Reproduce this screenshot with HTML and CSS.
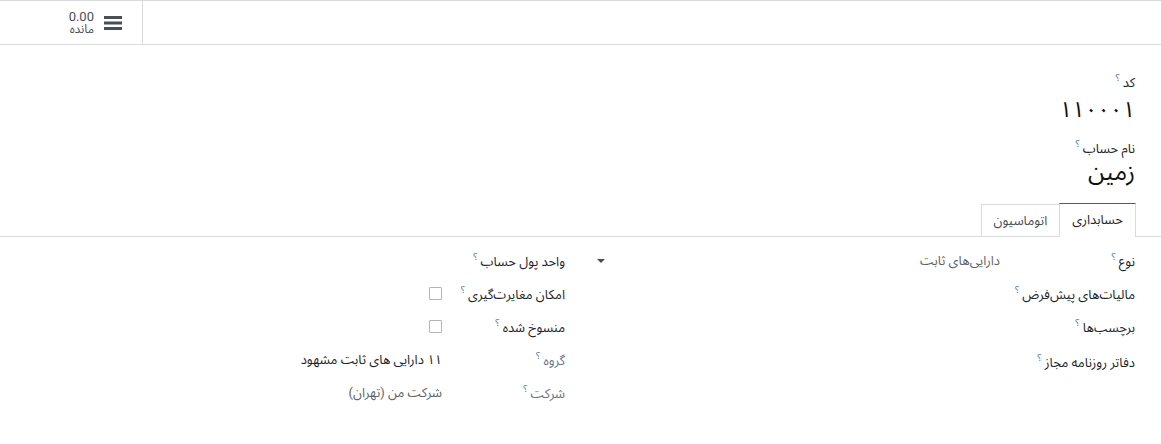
FILE: index.html
```html
<!DOCTYPE html>
<html lang="fa">
<head>
  <meta charset="UTF-8" />
  <title>حساب</title>
  <link rel="stylesheet" href="styles.css">
</head>
<body>
  <div class="topbar">
    <div class="balance-box">
      <div class="balance">
        <span class="balance-value">0.00</span>
        <span class="balance-label">مانده</span>
      </div>
      <svg class="menu-icon" width="18" height="16" viewBox="0 0 18 16">
        <rect x="0" y="1" width="18" height="3" fill="#4a4f55"/>
        <rect x="0" y="6.5" width="18" height="3" fill="#4a4f55"/>
        <rect x="0" y="12" width="18" height="3" fill="#4a4f55"/>
      </svg>
    </div>
  </div>

  <div class="sheet">
    <div class="title-field">
      <label class="title-label">کد<sup class="tip">؟</sup></label>
      <div class="title-value code">۱۱۰۰۰۱</div>
    </div>
    <div class="title-field">
      <label class="title-label">نام حساب<sup class="tip">؟</sup></label>
      <div class="title-value name">زمین</div>
    </div>

    <ul class="tabs">
      <li class="tab active">حسابداری</li>
      <li class="tab">اتوماسیون</li>
    </ul>

    <div class="groups">
      <div class="group group-main">
        <div class="row">
          <label class="field-label">نوع<sup class="tip">؟</sup></label>
          <div class="field-value select">
            <span class="muted">دارایی‌های ثابت</span>
            <span class="caret"></span>
          </div>
        </div>
        <div class="row">
          <label class="field-label">مالیات‌های پیش‌فرض<sup class="tip">؟</sup></label>
          <div class="field-value"></div>
        </div>
        <div class="row">
          <label class="field-label">برچسب‌ها<sup class="tip">؟</sup></label>
          <div class="field-value"></div>
        </div>
        <div class="row">
          <label class="field-label">دفاتر روزنامه مجاز<sup class="tip">؟</sup></label>
          <div class="field-value"></div>
        </div>
      </div>

      <div class="group group-side">
        <div class="row">
          <label class="field-label">واحد پول حساب<sup class="tip">؟</sup></label>
          <div class="field-value"></div>
        </div>
        <div class="row">
          <label class="field-label">امکان مغایرت‌گیری<sup class="tip">؟</sup></label>
          <div class="field-value"><span class="checkbox"></span></div>
        </div>
        <div class="row">
          <label class="field-label">منسوخ شده<sup class="tip">؟</sup></label>
          <div class="field-value"><span class="checkbox"></span></div>
        </div>
        <div class="row">
          <label class="field-label readonly">گروه<sup class="tip">؟</sup></label>
          <div class="field-value">۱۱ دارایی های ثابت مشهود</div>
        </div>
        <div class="row">
          <label class="field-label readonly">شرکت<sup class="tip">؟</sup></label>
          <div class="field-value muted">شرکت من (تهران)</div>
        </div>
      </div>
    </div>
  </div>
</body>
</html>
```

FILE: styles.css
```css
* {
  margin: 0;
  padding: 0;
  box-sizing: border-box;
}

body {
  font-family: Roboto, "Noto Sans Arabic", "Noto Naskh Arabic", "DejaVu Sans", sans-serif;
  font-size: 13px;
  color: #212529;
  background: #fff;
}

.topbar {
  height: 45px;
  border-top: 1px solid #d8dadd;
  border-bottom: 1px solid #d8dadd;
  display: flex;
}

.balance-box {
  width: 143px;
  border-right: 1px solid #d8dadd;
  display: flex;
  align-items: center;
  justify-content: flex-end;
  gap: 10px;
  padding-right: 20px;
}

.balance {
  display: flex;
  flex-direction: column;
  align-items: flex-end;
  line-height: 13px;
  color: #4a4f55;
}

.balance-value {
  font-size: 13px;
}

.balance-label {
  font-size: 12px;
}

.menu-icon {
  display: block;
}

.sheet {
  direction: rtl;
  padding-top: 23px;
}

.title-field {
  padding-right: 26px;
  margin-bottom: 9px;
}

.title-label {
  display: block;
  font-size: 13px;
  line-height: 20px;
}

.title-value {
  line-height: 30px;
  color: #111;
}

.title-value.code {
  font-size: 22px;
  letter-spacing: -2px;
  margin-top: 2px;
}

.title-value.name {
  font-size: 24px;
  margin-top: -2px;
}

.tip {
  font-size: 10px;
  color: #5a7a9a;
  margin-right: 3px;
  vertical-align: 6px;
}

.tabs {
  list-style: none;
  display: flex;
  border-bottom: 1px solid #d8dadd;
  padding-right: 25px;
  margin-top: 16px;
}

.tab {
  height: 33px;
  line-height: 32px;
  padding: 0 12px;
  border: 1px solid #d8dadd;
  border-bottom: none;
  margin-bottom: -1px;
  color: #4a4f55;
  background: #fff;
}

.tab.active {
  border-top-color: #714b67;
  color: #212529;
  height: 34px;
  padding: 0 12px;
}

.tab + .tab {
  border-right: none;
  margin-top: 1px;
  height: 32px;
}

.groups {
  display: flex;
  padding: 7px 26px 0 0;
  gap: 30px;
}

.group {
  display: flex;
  flex-direction: column;
}

.group-main {
  width: 540px;
}

.group-side {
  width: 285px;
}

.row {
  display: flex;
  align-items: center;
  min-height: 33px;
}

.group-main .row:nth-child(4) {
  min-height: 37px;
}

.field-label {
  width: 123px;
  flex-shrink: 0;
  white-space: nowrap;
}

.field-label.readonly {
  color: #6c757d;
}

.field-value {
  flex: 1;
  display: flex;
  align-items: center;
}

.select {
  justify-content: space-between;
  padding-right: 12px;
  padding-left: 2px;
}

.muted {
  color: #5f6368;
}

.caret {
  width: 0;
  height: 0;
  border-left: 4px solid transparent;
  border-right: 4px solid transparent;
  border-top: 4px solid #4a4f55;
}

.checkbox {
  display: inline-block;
  width: 13px;
  height: 13px;
  border: 1px solid #b5b5b5;
  border-radius: 1px;
}
```
